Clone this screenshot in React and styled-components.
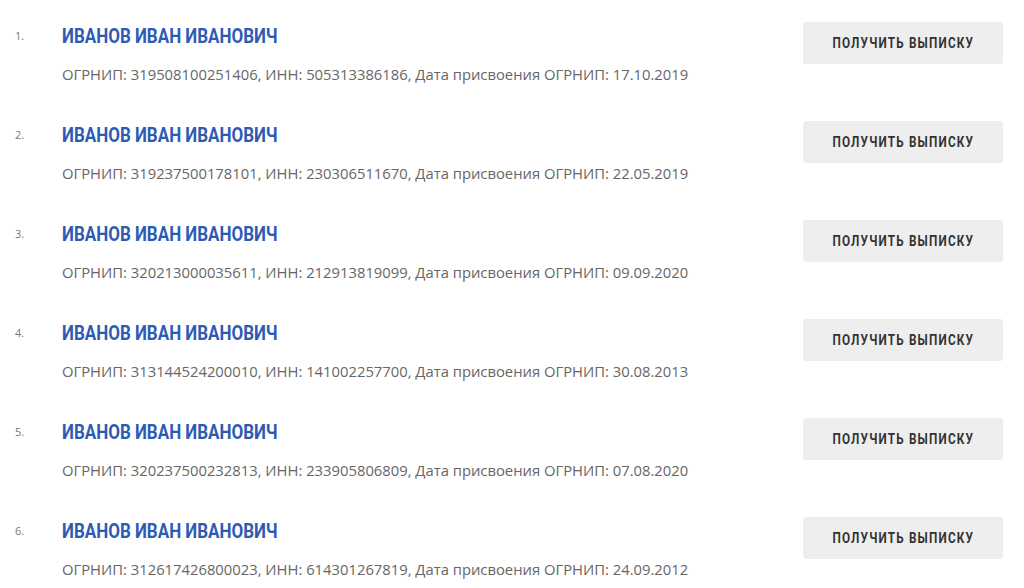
import React from "react";
import styled, { createGlobalStyle } from "styled-components";

const GlobalStyle = createGlobalStyle`
  html, body { margin: 0; padding: 0; background: #fff; }
  body { font-family: "Open Sans", "Liberation Sans", sans-serif; }
`;

const List = styled.ol`
  list-style: none;
  margin: 0;
  padding: 22px 21px 8px 15px;
  display: flex;
  flex-direction: column;
  gap: 37px;
`;

const Row = styled.li`
  display: grid;
  grid-template-columns: 47px 1fr 200px;
  align-items: start;
`;

const Num = styled.span`
  font-family: "Open Sans", sans-serif;
  font-size: 11px;
  color: #777;
  line-height: 16px;
  padding-top: 6px;
`;

const Body = styled.div`
  display: flex;
  flex-direction: column;
  align-items: flex-start;
  gap: 15px;
  padding-top: 1px;
`;

/* Narrow display face: Roboto bold squeezed horizontally */
const Name = styled.a`
  display: inline-block;
  font-family: Roboto, "Liberation Sans", sans-serif;
  font-weight: 700;
  font-size: 20px;
  line-height: 26px;
  color: #2d5bb3;
  text-decoration: none;
  white-space: nowrap;
  transform: scaleX(0.85);
  transform-origin: left center;
`;

const Details = styled.p`
  margin: 0;
  font-size: 14.8px;
  line-height: 20px;
  color: #666;
`;

const Button = styled.button`
  height: 42px;
  width: 200px;
  border: none;
  border-radius: 3px;
  background: #eeeeee;
  color: #333;
  cursor: pointer;
  display: flex;
  align-items: center;
  justify-content: center;
  padding: 0;
`;

const ButtonLabel = styled.span`
  display: inline-block;
  font-family: Roboto, "Liberation Sans", sans-serif;
  font-weight: 700;
  font-size: 14px;
  letter-spacing: 1.4px;
  white-space: nowrap;
  transform: scaleX(0.84);
`;

const rows = [
  ["319508100251406", "505313386186", "17.10.2019"],
  ["319237500178101", "230306511670", "22.05.2019"],
  ["320213000035611", "212913819099", "09.09.2020"],
  ["313144524200010", "141002257700", "30.08.2013"],
  ["320237500232813", "233905806809", "07.08.2020"],
  ["312617426800023", "614301267819", "24.09.2012"],
];

export default function App() {
  return (
    <>
      <GlobalStyle />
      <List>
        {rows.map(([ogrn, inn, date], i) => (
          <Row key={ogrn}>
            <Num>{i + 1}.</Num>
            <Body>
              <Name href="#">ИВАНОВ ИВАН ИВАНОВИЧ</Name>
              <Details>
                ОГРНИП: {ogrn}, ИНН: {inn}, Дата присвоения ОГРНИП: {date}
              </Details>
            </Body>
            <Button>
              <ButtonLabel>ПОЛУЧИТЬ ВЫПИСКУ</ButtonLabel>
            </Button>
          </Row>
        ))}
      </List>
    </>
  );
}
